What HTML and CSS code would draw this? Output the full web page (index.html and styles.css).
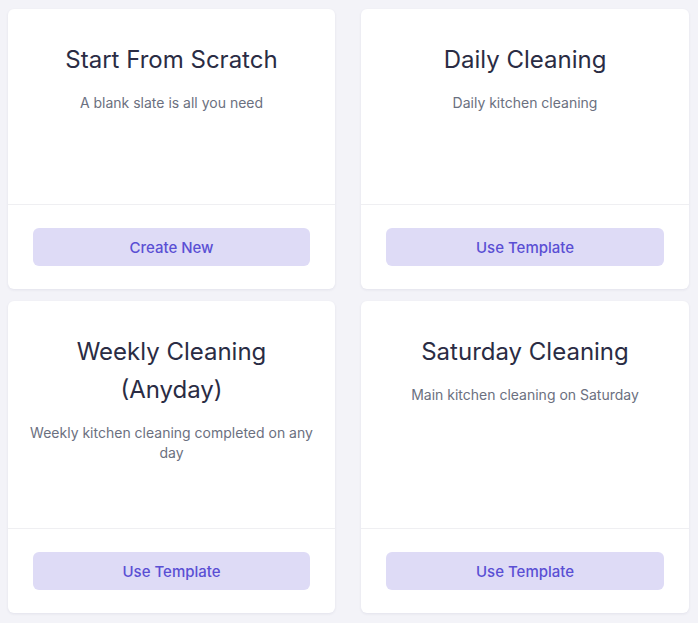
FILE: index.html
```html
<!DOCTYPE html>
<html>
<head>
<meta charset="utf-8">
<title>Templates</title>
<link rel="stylesheet" href="styles.css">
</head>
<body>
<div class="tpl_grid">
	<div class="tpl_card">
		<div class="tpl_body">
			<h2 class="tpl_title">Start From Scratch</h2>
			<p class="tpl_desc">A blank slate is all you need</p>
		</div>
		<div class="tpl_footer">
			<button class="tpl_button" type="button">Create New</button>
		</div>
	</div>
	<div class="tpl_card">
		<div class="tpl_body">
			<h2 class="tpl_title">Daily Cleaning</h2>
			<p class="tpl_desc">Daily kitchen cleaning</p>
		</div>
		<div class="tpl_footer">
			<button class="tpl_button" type="button">Use Template</button>
		</div>
	</div>
	<div class="tpl_card">
		<div class="tpl_body">
			<h2 class="tpl_title">Weekly Cleaning (Anyday)</h2>
			<p class="tpl_desc">Weekly kitchen cleaning completed on any day</p>
		</div>
		<div class="tpl_footer">
			<button class="tpl_button" type="button">Use Template</button>
		</div>
	</div>
	<div class="tpl_card">
		<div class="tpl_body">
			<h2 class="tpl_title">Saturday Cleaning</h2>
			<p class="tpl_desc">Main kitchen cleaning on Saturday</p>
		</div>
		<div class="tpl_footer">
			<button class="tpl_button" type="button">Use Template</button>
		</div>
	</div>
</div>
</body>
</html>
```

FILE: styles.css
```css
html, body {
	margin: 0;
	padding: 0;
	background: #f3f3f8;
	font-family: Inter, "Liberation Sans", sans-serif;
}

.tpl_grid {
	display: grid;
	grid-template-columns: 327px 328px;
	column-gap: 26px;
	row-gap: 12px;
	padding: 9px 9px 10px 8px;
}

.tpl_card {
	display: flex;
	flex-direction: column;
	background: #ffffff;
	border-radius: 6px;
	box-shadow: 0 1px 3px rgba(40, 40, 90, 0.08);
}

.tpl_body {
	flex: 1;
	box-sizing: border-box;
	min-height: 195px;
	padding: 32px 16px 65px;
	text-align: center;
}

.tpl_title {
	margin: 0;
	font-size: 24px;
	line-height: 38px;
	font-weight: 400;
	color: #2a2c44;
}

.tpl_desc {
	margin: 14px 0 0;
	font-size: 14px;
	line-height: 20px;
	color: #6b7080;
}

.tpl_footer {
	border-top: 1px solid #efeff2;
	padding: 23px 25px;
}

.tpl_button {
	display: block;
	width: 100%;
	height: 38px;
	border: 0;
	border-radius: 6px;
	background: #dedbf6;
	color: #5a4fd4;
	font-family: inherit;
	font-size: 15px;
	font-weight: 500;
	cursor: pointer;
}
```
